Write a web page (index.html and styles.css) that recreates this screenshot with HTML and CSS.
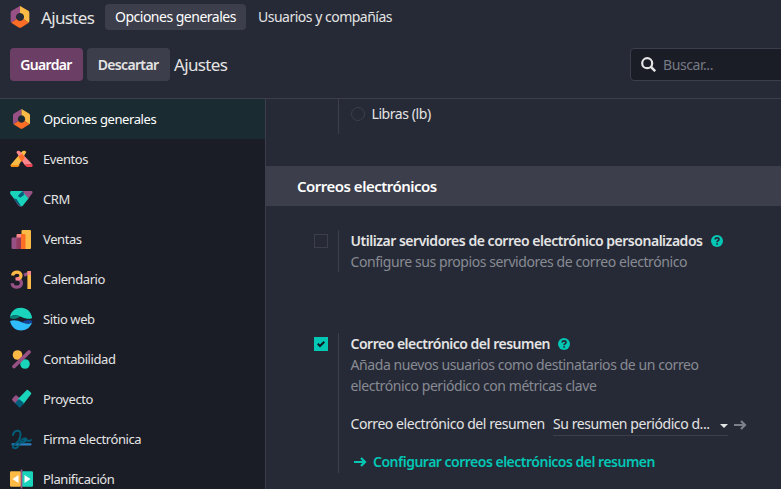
FILE: index.html
```html
<!DOCTYPE html>
<html lang="es">
<head>
<meta charset="utf-8">
<title>Ajustes</title>
<link rel="stylesheet" href="styles.css">
</head>
<body>
<svg class="defs" width="0" height="0" aria-hidden="true">
  <symbol id="hex" viewBox="0 0 22 24">
    <path fill="#985184" d="M11 0v7.500A4.500 4.500 0 0 0 7.200 14.300L1.500 18.200Q.8 17.500.8 16.500V7.500Q.8 6 2 5.300L9.500.8Q10.200.2 11 0z"/>
    <path fill="#fbb945" d="M11 0q.8.200 1.500.8L20 5.300q1.200.7 1.200 2.200v9q0 1-.7 1.700l-5.700-3.900A4.500 4.500 0 0 0 11 7.500z"/>
    <path fill="#fc6d26" d="M1.500 18.200l5.700-3.900A4.500 4.500 0 0 0 14.800 14.300l5.700 3.900-7.600 5q-1.900 1.200-3.800 0z"/>
  </symbol>
  <symbol id="help" viewBox="0 0 12 12">
    <circle cx="6" cy="6" r="6" fill="#02c7b5"/>
    <path fill="none" stroke="#262a36" stroke-width="1.700" d="M4 4.500C4.200 3.400 5 2.900 6 2.900c1.100 0 2 .6 2 1.500C8 5.700 6.100 5.600 6.100 7.300M6.100 8.200v1.500"/>
  </symbol>
  <symbol id="arrow" viewBox="0 0 13 10">
    <path fill="none" stroke="currentColor" stroke-width="2.200" d="M0 5h11M7 1l4 4-4 4"/>
  </symbol>
</svg>

<header class="navbar">
  <svg class="brand-icon"><use href="#hex"/></svg>
  <span class="brand">Ajustes</span>
  <nav class="menu">
    <a class="menu-item active">Opciones generales</a>
    <a class="menu-item users">Usuarios y compañías</a>
  </nav>
</header>

<div class="control">
  <button class="btn primary">Guardar</button>
  <button class="btn secondary">Descartar</button>
  <span class="crumb">Ajustes</span>
  <div class="search">
    <svg width="15" height="15" viewBox="0 0 15 15"><circle cx="6.200" cy="6.200" r="5" fill="none" stroke="#e4e4e4" stroke-width="2.200"/><path stroke="#e4e4e4" stroke-width="2.500" d="M9.700 9.700l4.500 4.500"/></svg>
    <span>Buscar...</span>
  </div>
</div>

<div class="body">
  <aside class="sidebar">
    <a class="tab active"><svg class="ico" viewBox="0 0 24 24"><use href="#hex" x="3" y="2" width="19" height="20"/></svg><span>Opciones generales</span></a>
    <a class="tab"><svg class="ico" viewBox="0 0 24 24">
      <path fill="#fbb945" d="M13 4.500c1-1.300 3.500-1 4.300.5L10.500 17 8 20H2.500L1.500 18z"/>
      <path fill="#f98f14" d="M1.500 18h9.300L9 20H3Q1.600 20 1.500 18z"/>
      <path fill="#fc868b" d="M7.500 5.500c0-1.800 2.800-2.300 3.800-.8L23.500 17.500l-8 .3z"/>
      <path fill="#fc6d26" d="M9.500 9.500l3.500-2.800 2.700 3.800-3 4.500z"/>
      <path fill="#f94651" d="M15 17.500h8.500q.5 2.500-1.500 2.500h-4.200z"/></svg><span>Eventos</span></a>
    <a class="tab"><svg class="ico" viewBox="0 0 24 24">
      <path fill="#985184" d="M13 4h9.500q1.500 0 1 2l-4.500 6zM4.500 11.500l8 8q-2 .3-3.200-1z"/>
      <path fill="#1ad3bb" d="M2.500 4H13l6.500 7.500-5.500 7q-1.500 1.700-3.500 0L1.300 7Q.5 4 2.500 4z"/>
      <path fill="#005e7a" d="M12 5.500l2.500-1L15 8l-3.500 2.500q-2 .2-2.500-1.800zM4.500 11.500l3 .5 4.500 7-2-.5z"/></svg><span>CRM</span></a>
    <a class="tab"><svg class="ico" viewBox="0 0 24 24">
      <rect x="2.500" y="10.500" width="7" height="11.500" rx="1.200" fill="#985184"/>
      <path fill="#fc868b" d="M7.500 8q0-1 1-1h5v5h-6z"/><path fill="#953b60" d="M7.500 10.500h5V22h-5z"/>
      <path fill="#fbb945" d="M12.500 4q0-1 1-1h7.500q1 0 1 1v17q0 1-1 1h-8.500z"/><path fill="#fc6d26" d="M12 7h3q1.500 0 1.500 1v14H12z"/></svg><span>Ventas</span></a>
    <a class="tab"><svg class="ico" viewBox="0 0 24 24" fill="none" stroke-width="3.200">
      <path stroke="#985184" d="M7.500 11.900c6.500 0 6.500 8.300.5 8.300-3 0-4.500-1-5-4"/>
      <path stroke="#fbb945" d="M3.500 8.500C4.500 4 12 4 12 8.500c0 1.500-1 2.800-3 3.200"/><path stroke="#fc868b" d="M6.500 12l4.300-.3"/>
      <path stroke="#985184" d="M15 8.300l3.500-1.700"/><path stroke="#fbb945" stroke-width="3.600" d="M20.200 4v18"/><path fill="#fc868b" d="M18.400 5l2-1h1.600v4l-3.600-.5z"/></svg><span>Calendario</span></a>
    <a class="tab"><svg class="ico" viewBox="0 0 24 24">
      <path fill="#1ad3bb" d="M1 10C2 4 6.500.7 12 .7S22 4 23.200 11c-3 1.500-6.500.8-10-.7C8 8 4.500 7.500 1 10z"/>
      <path fill="#087e76" d="M1 10c3-2.500 6.500-2.200 10.500-.7C8 12.500 3.500 12.500 1 11z"/>
      <path fill="#2ebcfa" d="M1 14c4-1.700 8-.5 12 1.200 4 1.700 7.500 2 10 .3C21.500 20.500 17 23.500 12 23.500S2.500 20.500 1 14z"/>
      <path fill="#144496" d="M13 15.200c3-2.200 7-2.700 10.200-1.500v2c-3 1.300-6.500 1-10.200-.5z"/></svg><span>Sitio web</span></a>
    <a class="tab"><svg class="ico" viewBox="0 0 24 24">
      <circle cx="8.500" cy="8" r="4.800" fill="#fbb945"/><circle cx="16" cy="17" r="4.800" fill="#1ad3bb"/>
      <path stroke="#985184" stroke-width="3.800" stroke-linecap="round" d="M5 19.500L20 5"/></svg><span>Contabilidad</span></a>
    <a class="tab"><svg class="ico" viewBox="0 0 24 24">
      <path fill="#985184" d="M5 8.700q1-.9 2 0L10.500 12 6 17l-3.500-3.500q-1-1 0-2z" transform="translate(1 0)"/>
      <path fill="#1ad3bb" d="M17.500 3.200q1-.8 2 .2l2.300 2.200q1 1 0 2L14 17.500l-5.500-5z"/>
      <path fill="#005e7a" d="M10 12l5 4-3.200 4q-1 1-2 0l-4-4z"/></svg><span>Proyecto</span></a>
    <a class="tab"><svg class="ico" viewBox="0 0 24 24" fill="none">
      <path stroke="#2d80c0" stroke-width="2.200" stroke-linecap="round" d="M3.500 17.300h18"/>
      <path stroke="#005e7a" stroke-width="1.900" stroke-linecap="round" d="M4 8c1-5 7.500-6 7.500-1C11.500 12 10 15 5 18c-3 2.500 1 4.500 3.500 2 4-4 2.500-9 8-8.500 2.500.5-3 3-3 4s5-3.500 5.500-2 2 0 3-.5"/></svg><span>Firma electrónica</span></a>
    <a class="tab"><svg class="ico" viewBox="0 0 24 24">
      <rect x="1" y="4.300" width="11" height="15.400" rx="1.200" fill="#fbb945"/><rect x="12.500" y="4.300" width="11.500" height="15.400" rx="1.200" fill="#1ad3bb"/>
      <path stroke="#985184" stroke-width="1.700" d="M12.500 2.500v19"/><path fill="#fff" d="M9.500 8v8l-6-4zM15.500 8v8l6-4z"/></svg><span>Planificación</span></a>
  </aside>

  <main class="main">
    <div class="setting weight">
      <div class="side"></div>
      <div class="content"><label class="option"><i class="radio"></i><span class="t-lb">Libras (lb)</span></label></div>
    </div>
    <h2 class="section"><span>Correos electrónicos</span></h2>
    <div class="setting servers">
      <div class="side"><i class="check"></i></div>
      <div class="content">
        <div class="title"><span class="t-util">Utilizar servidores de correo electrónico personalizados</span><svg class="help"><use href="#help"/></svg></div>
        <p class="desc d1">Configure sus propios servidores de correo electrónico</p>
      </div>
    </div>
    <div class="setting digest">
      <div class="side"><i class="check on"><svg width="14" height="14" viewBox="0 0 14 14"><path fill="none" stroke="#111722" stroke-width="2" d="M3.800 6.800L6 9l4.300-4.300"/></svg></i></div>
      <div class="content">
        <div class="title"><span class="t-dig">Correo electrónico del resumen</span><svg class="help"><use href="#help"/></svg></div>
        <p class="desc d2">Añada nuevos usuarios como destinatarios de un correo<br><span class="d3">electrónico periódico con métricas clave</span></p>
        <div class="field">
          <span class="t-field">Correo electrónico del resumen</span>
          <div class="select"><span>Su resumen periódico d...</span><i class="caret"></i></div>
          <svg class="arrow"><use href="#arrow"/></svg>
        </div>
        <a class="link"><svg class="arrow"><use href="#arrow"/></svg><span>Configurar correos electrónicos del resumen</span></a>
      </div>
    </div>
  </main>
</div>
</body>
</html>
```
FILE: styles.css
```css
* { box-sizing: border-box; }
body {
  margin: 0;
  width: 781px;
  height: 489px;
  overflow: hidden;
  background: #262a36;
  color: #e4e4e4;
  font: 14px/21px "Noto Sans", "Open Sans", sans-serif;
  letter-spacing: -0.43px;
  white-space: nowrap;
}
.defs { position: absolute; }
span { display: inline-block; }
svg { display: block; flex: none; }

.navbar { display: flex; align-items: center; height: 34px; padding-left: 9px; }
.brand-icon { width: 22px; height: 22px; }
.brand { width: 64px; margin-left: 10px; font-size: 17px; letter-spacing: -0.65px; }
.menu { display: flex; gap: 2px; }
.menu-item { height: 26px; padding: 0 10px; line-height: 26px; border-radius: 4px; letter-spacing: -0.5px; }
.menu-item.active { width: 141px; background: #3c3e4b; color: #fff; }

.control { display: flex; align-items: center; height: 65px; padding: 0 0 3px 10px; border-bottom: 1px solid #3c3e4b; }
.btn { height: 33px; padding: 0 1px 0 0; border: 0; border-radius: 4px; font: 600 14px/33px "Noto Sans", sans-serif; letter-spacing: -0.65px; }
.primary { width: 73px; background: #6b3e66; color: #fff; }
.secondary { width: 83px; margin-left: 4px; background: #3c3e4b; color: #e4e4e4; }
.crumb { margin-left: 4px; font-size: 17px; letter-spacing: -0.65px; }
.search { display: flex; align-items: center; gap: 7px; width: 160px; height: 33px; margin: 0 -9px 0 auto; padding-left: 10px; border: 1px solid #3c3e4b; border-radius: 4px; background: #1b1d26; color: #767a84; }

.body { display: flex; height: 390px; }
.sidebar { flex: none; width: 266px; height: 390px; overflow: hidden; background: #1b1d26; border-right: 1px solid #3c3e4b; }
.tab { display: flex; align-items: center; gap: 10px; height: 40px; padding-left: 9px; font-size: 13px; letter-spacing: -0.41px; }
.tab.active { background: #1a2c32; color: #fff; }
.ico { width: 24px; height: 24px; }

.main { flex: 1; min-width: 0; }
.setting { display: flex; }
.side { flex: none; width: 72px; padding: 4px 0 0 48px; }
.content { flex: none; border-left: 1px solid #3c3e4b; padding-left: 11.500px; }
.weight { height: 35px; }
.option { display: flex; align-items: center; gap: 7px; height: 30px; }
.option span { margin-top: -1px; }
.radio { width: 14px; height: 14px; border: 1px solid #3c3e4b; border-radius: 50%; }
.section { height: 40px; margin: 32px 0 24px; padding-left: 31px; background: #3c3e4b; color: #fff; font-size: 15px; font-weight: 600; line-height: 40px; letter-spacing: -0.5px; }
.servers { height: 42px; margin-bottom: 61px; }
.check { display: block; width: 14px; height: 14px; border: 1px solid #3c3e4b; }
.check.on { border: 0; background: #02c7b5; }
.title { display: flex; align-items: center; gap: 8px; height: 21px; font-weight: 600; letter-spacing: -0.5px; }
.t-util { letter-spacing: -0.475px; }
.help { width: 12px; height: 12px; }
.desc { margin: 0; color: #888b93; letter-spacing: -0.42px; }
.digest { height: 140px; }
.field { display: flex; align-items: flex-start; height: 23px; margin-top: 17px; }
.t-field { width: 202.500px; }
.select { display: flex; align-items: flex-start; justify-content: space-between; width: 175px; height: 23px; border-bottom: 1px solid #3c3e4b; }
.caret { border: 4px solid transparent; border-top-color: #e4e4e4; border-bottom: 0; margin-top: 11px; }
.arrow { width: 13px; height: 10px; }
.field .arrow { margin: 7px 0 0 6px; color: #7c808a; }
.link { display: flex; align-items: center; gap: 6px; height: 21px; margin: 15px 0 0 3.500px; color: #02c7b5; font-weight: 600; letter-spacing: -0.5px; }
```
